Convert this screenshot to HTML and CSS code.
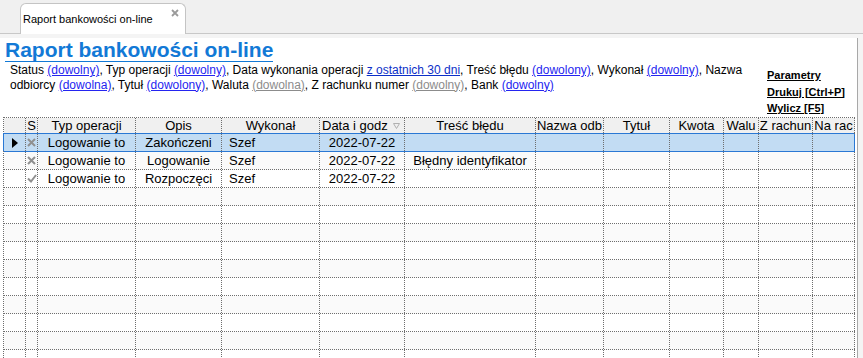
FILE: index.html
```html
<!DOCTYPE html>
<html lang="pl">

<head>
  <meta charset="utf-8">
  <title>Raport bankowości on-line</title>
  <link rel="stylesheet" href="styles.css">
</head>

<body>
  <div class="tabbar">
    <div class="tab">
      <span class="tab-label">Raport bankowości on-line</span>
      <svg class="tab-close" width="8" height="8" viewBox="0 0 8 8">
        <path d="M1 1L7 7M7 1L1 7" stroke="#9a9a9a" stroke-width="1.8" />
      </svg>
    </div>
  </div>

  <div class="page">
    <h1 class="title">Raport bankowości on-line</h1>

    <div class="head">
      <p class="desc">
        Status <a class="pick">(dowolny)</a>, Typ operacji <a class="pick">(dowolny)</a>, Data wykonania operacji
        <a class="pick set">z ostatnich 30 dni</a>, Treść błędu <a class="pick">(dowolony)</a>, Wykonał
        <a class="pick">(dowolny)</a>, Nazwa<br>
        odbiorcy <a class="pick">(dowolna)</a>, Tytuł <a class="pick">(dowolony)</a>, Waluta
        <a class="pick off">(dowolna)</a>, Z rachunku numer <a class="pick off">(dowolny)</a>, Bank
        <a class="pick">(dowolny)</a>
      </p>
      <div class="actions">
        <a>Parametry</a>
        <a>Drukuj [Ctrl+P]</a>
        <a>Wylicz [F5]</a>
      </div>
    </div>

    <div class="grid">
      <div class="row header">
        <div class="cell"></div>
        <div class="cell">S</div>
        <div class="cell">Typ operacji</div>
        <div class="cell">Opis</div>
        <div class="cell">Wykonał</div>
        <div class="cell left">Data i godz<svg class="sort" width="7" height="6" viewBox="0 0 7 6">
            <path d="M0.5 0.5H6.5L3.5 5.5Z" fill="none" stroke="#b0b0b0" />
          </svg></div>
        <div class="cell">Treść błędu</div>
        <div class="cell">Nazwa odb</div>
        <div class="cell">Tytuł</div>
        <div class="cell">Kwota</div>
        <div class="cell">Walu</div>
        <div class="cell">Z rachun</div>
        <div class="cell">Na rac</div>
      </div>

      <div class="row selected">
        <div class="cell icon"><svg width="6" height="10" viewBox="0 0 6 10">
            <path d="M0 0L6 5L0 10Z" fill="#000" />
          </svg></div>
        <div class="cell icon"><svg width="9" height="9" viewBox="0 0 9 9">
            <path d="M1 1L8 8M8 1L1 8" stroke="#909090" stroke-width="2" />
          </svg></div>
        <div class="cell">Logowanie to</div>
        <div class="cell">Zakończeni</div>
        <div class="cell who">Szef</div>
        <div class="cell">2022-07-22</div>
        <div class="cell"></div>
        <div class="cell"></div>
        <div class="cell"></div>
        <div class="cell"></div>
        <div class="cell"></div>
        <div class="cell"></div>
        <div class="cell"></div>
      </div>

      <div class="row alt">
        <div class="cell"></div>
        <div class="cell icon"><svg width="9" height="9" viewBox="0 0 9 9">
            <path d="M1 1L8 8M8 1L1 8" stroke="#909090" stroke-width="2" />
          </svg></div>
        <div class="cell">Logowanie to</div>
        <div class="cell">Logowanie</div>
        <div class="cell who">Szef</div>
        <div class="cell">2022-07-22</div>
        <div class="cell">Błędny identyfikator</div>
        <div class="cell"></div>
        <div class="cell"></div>
        <div class="cell"></div>
        <div class="cell"></div>
        <div class="cell"></div>
        <div class="cell"></div>
      </div>

      <div class="row">
        <div class="cell"></div>
        <div class="cell icon"><svg width="10" height="9" viewBox="0 0 10 9">
            <path d="M1 4.5L4 7.5L9 1" stroke="#909090" stroke-width="2" fill="none" />
          </svg></div>
        <div class="cell">Logowanie to</div>
        <div class="cell">Rozpoczęci</div>
        <div class="cell who">Szef</div>
        <div class="cell">2022-07-22</div>
        <div class="cell"></div>
        <div class="cell"></div>
        <div class="cell"></div>
        <div class="cell"></div>
        <div class="cell"></div>
        <div class="cell"></div>
        <div class="cell"></div>
      </div>
    </div>
  </div>

  <script>
    // empty rows below the data, striped like the grid
    var grid = document.querySelector(".grid");
    for (var r = 0; r < 10; r++) {
      var row = document.createElement("div");
      row.className = r % 2 == 0 ? "row alt" : "row";
      for (var c = 0; c < 13; c++) {
        var cell = document.createElement("div");
        cell.className = "cell";
        row.appendChild(cell);
      }
      grid.appendChild(row);
    }
  </script>
</body>

</html>
```

FILE: styles.css
```css
body {
  margin: 0;
  height: 358px;
  overflow: hidden;
  background-color: #f4f4f4;
  font-family: "Liberation Sans", Arial, sans-serif;
  color: #000000;
}

/* tab strip */

.tabbar {
  height: 33px;
  display: flex;
  align-items: flex-end;
  background-color: #f0f0f0;
  border-bottom: 1px solid #c8c8c8;
}

.tab {
  display: flex;
  align-items: flex-start;
  width: 164px;
  height: 30px;
  margin: 0 0 -1px 20px;
  background-color: #ffffff;
  border: 1px solid #c4c4c4;
  border-bottom: none;
  border-radius: 6px 6px 0 0;
}

.tab-label {
  padding: 9px 0 0 2px;
  font-size: 11px;
  line-height: 13px;
}

.tab-close {
  margin: 5px 6px 0 auto;
}

/* report body */

.page {
  width: 857px;
  height: 324px;
  background-color: #ffffff;
  border-right: 1px solid #a8a8a8;
}

.title {
  width: fit-content;
  margin: 4px 0 0 5px;
  font-size: 21px;
  line-height: 23px;
  font-weight: bold;
  color: #1279d6;
  border-bottom: 1px solid #1279d6;
}

.head {
  display: flex;
  height: 55px;
}

.desc {
  width: 757px;
  margin: 1px 0 0 10px;
  font-size: 12px;
  line-height: 14.5px;
  white-space: nowrap;
}

.pick {
  color: #2424f0;
  text-decoration: underline;
}

.pick.set {
  color: #0c2fc8;
}

.pick.off {
  color: #8c8c8c;
}

.actions {
  padding-top: 5px;
  font-size: 11px;
  line-height: 16.5px;
  font-weight: bold;
}

.actions a {
  display: block;
  color: #000000;
  text-decoration: underline;
}

/* data grid */

.grid {
  width: 851px;
  margin-left: 3px;
  border-left: 1px dotted #6e6e6e;
  border-top: 1px dotted #6e6e6e;
  font-size: 13px;
}

.row {
  display: grid;
  grid-template-columns: 22px 12px 98px 86px 98px 85px 131px 68px 66px 54px 35px 54px 42px;
  box-sizing: border-box;
  height: 18px;
  line-height: 17px;
  border-bottom: 1px dotted #6e6e6e;
  background-color: #ffffff;
}

.row.alt {
  background-color: #fafafa;
}

.row.header {
  height: 16px;
  line-height: 15px;
  background-color: #f0f0f0;
}

.row.selected {
  background-color: #c2dcf3;
  border-bottom: 1px solid #2a78d4;
  box-shadow: -1px -1px 0 #2a78d4;
}

.row.selected .cell:last-child {
  border-right: 1px solid #2a78d4;
}

.cell {
  box-sizing: border-box;
  border-right: 1px dotted #6e6e6e;
  overflow: hidden;
  white-space: nowrap;
  text-align: center;
}

.cell.left {
  text-align: left;
  padding-left: 2px;
}

.cell.who {
  text-align: left;
  padding-left: 7px;
}

.cell.icon {
  display: flex;
  align-items: center;
  justify-content: center;
}

.sort {
  margin-left: 5px;
  vertical-align: 1px;
}
```
